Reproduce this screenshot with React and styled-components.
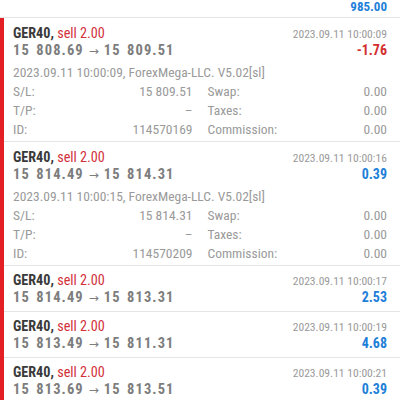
import React from 'react';
import styled, { createGlobalStyle } from 'styled-components';

const GlobalStyle = createGlobalStyle`
  html, body {
    margin: 0;
    padding: 0;
    background: #ffffff;
  }
  body {
    font-family: "Liberation Sans Narrow", "Roboto Condensed", Roboto, sans-serif;
  }
`;

const Page = styled.div`
  width: 400px;
  height: 400px;
  overflow: hidden;
  background: #ffffff;
`;

const TopBar = styled.div`
  height: 17px;
  display: flex;
  justify-content: flex-end;
  align-items: flex-end;
  padding: 0 13px 0 0;
  border-bottom: 1px solid #e4e4e4;
`;

const Balance = styled.span`
  font-size: 13px;
  line-height: 13px;
  font-weight: 700;
  color: #1e7fd8;
  margin-bottom: 4px;
`;

const List = styled.div`
  border-left: 4px solid #e31e24;
`;

const Row = styled.div`
  padding: ${(p) => (p.expanded ? '7px' : '6px')} 13px ${(p) => (p.expanded ? '2px' : '5px')} 9px;
  border-bottom: 1px solid #e4e4e4;
`;

const HeaderLine = styled.div`
  display: flex;
  justify-content: space-between;
  align-items: baseline;
  height: 17px;
  line-height: 17px;
`;

const Symbol = styled.span`
  font-size: 14.2px;
  font-weight: 700;
  color: #3a3a3a;
`;

const Side = styled.span`
  font-weight: 400;
  color: #d2303a;
`;

const Prices = styled.span`
  font-size: 14.5px;
  font-weight: 700;
  color: #7d7d7d;
  letter-spacing: 1.1px;
  word-spacing: 2px;
  white-space: nowrap;
`;

const Arrow = styled.span`
  display: inline-block;
  width: 12px;
  margin: 0 4px;
  text-align: center;
  font-family: "DejaVu Sans", sans-serif;
  font-weight: 400;
  font-size: 12px;
  letter-spacing: 0;
`;

const Time = styled.span`
  font-size: 11.6px;
  color: #9a9a9a;
`;

const Profit = styled.span`
  font-size: 14px;
  font-weight: 700;
  color: ${(p) => (p.value < 0 ? '#d32f2f' : '#1e7fd8')};
`;

const Details = styled.div`
  margin-top: 4px;
  font-size: 13.5px;
  color: #9a9a9a;
`;

const Comment = styled.div`
  line-height: 19px;
  white-space: nowrap;
`;

const Grid = styled.div`
  display: grid;
  grid-template-columns: 1fr 1fr;
  column-gap: 15px;
`;

const Field = styled.div`
  display: flex;
  justify-content: space-between;
  line-height: 19px;
`;

const deals = [
  {
    open: '15 808.69', close: '15 809.51', time: '2023.09.11 10:00:09', profit: -1.76,
    details: { opened: '2023.09.11 10:00:09', sl: '15 809.51', id: '114570169' },
  },
  {
    open: '15 814.49', close: '15 814.31', time: '2023.09.11 10:00:16', profit: 0.39,
    details: { opened: '2023.09.11 10:00:15', sl: '15 814.31', id: '114570209' },
  },
  { open: '15 814.49', close: '15 813.31', time: '2023.09.11 10:00:17', profit: 2.53 },
  { open: '15 813.49', close: '15 811.31', time: '2023.09.11 10:00:19', profit: 4.68 },
  { open: '15 813.69', close: '15 813.51', time: '2023.09.11 10:00:21', profit: 0.39 },
];

const DealRow = ({ deal }) => (
  <Row expanded={!!deal.details}>
    <HeaderLine>
      <Symbol>
        GER40, <Side>sell 2.00</Side>
      </Symbol>
      <Time>{deal.time}</Time>
    </HeaderLine>
    <HeaderLine>
      <Prices>
        {deal.open}<Arrow>→</Arrow>{deal.close}
      </Prices>
      <Profit value={deal.profit}>{deal.profit.toFixed(2)}</Profit>
    </HeaderLine>
    {deal.details && (
      <Details>
        <Comment>{deal.details.opened}, ForexMega-LLC. V5.02[sl]</Comment>
        <Grid>
          <Field><span>S/L:</span><span>{deal.details.sl}</span></Field>
          <Field><span>Swap:</span><span>0.00</span></Field>
          <Field><span>T/P:</span><span>–</span></Field>
          <Field><span>Taxes:</span><span>0.00</span></Field>
          <Field><span>ID:</span><span>{deal.details.id}</span></Field>
          <Field><span>Commission:</span><span>0.00</span></Field>
        </Grid>
      </Details>
    )}
  </Row>
);

export default function App() {
  return (
    <Page>
      <GlobalStyle />
      <TopBar>
        <Balance>985.00</Balance>
      </TopBar>
      <List>
        {deals.map((d, i) => (
          <DealRow key={i} deal={d} />
        ))}
      </List>
    </Page>
  );
}
